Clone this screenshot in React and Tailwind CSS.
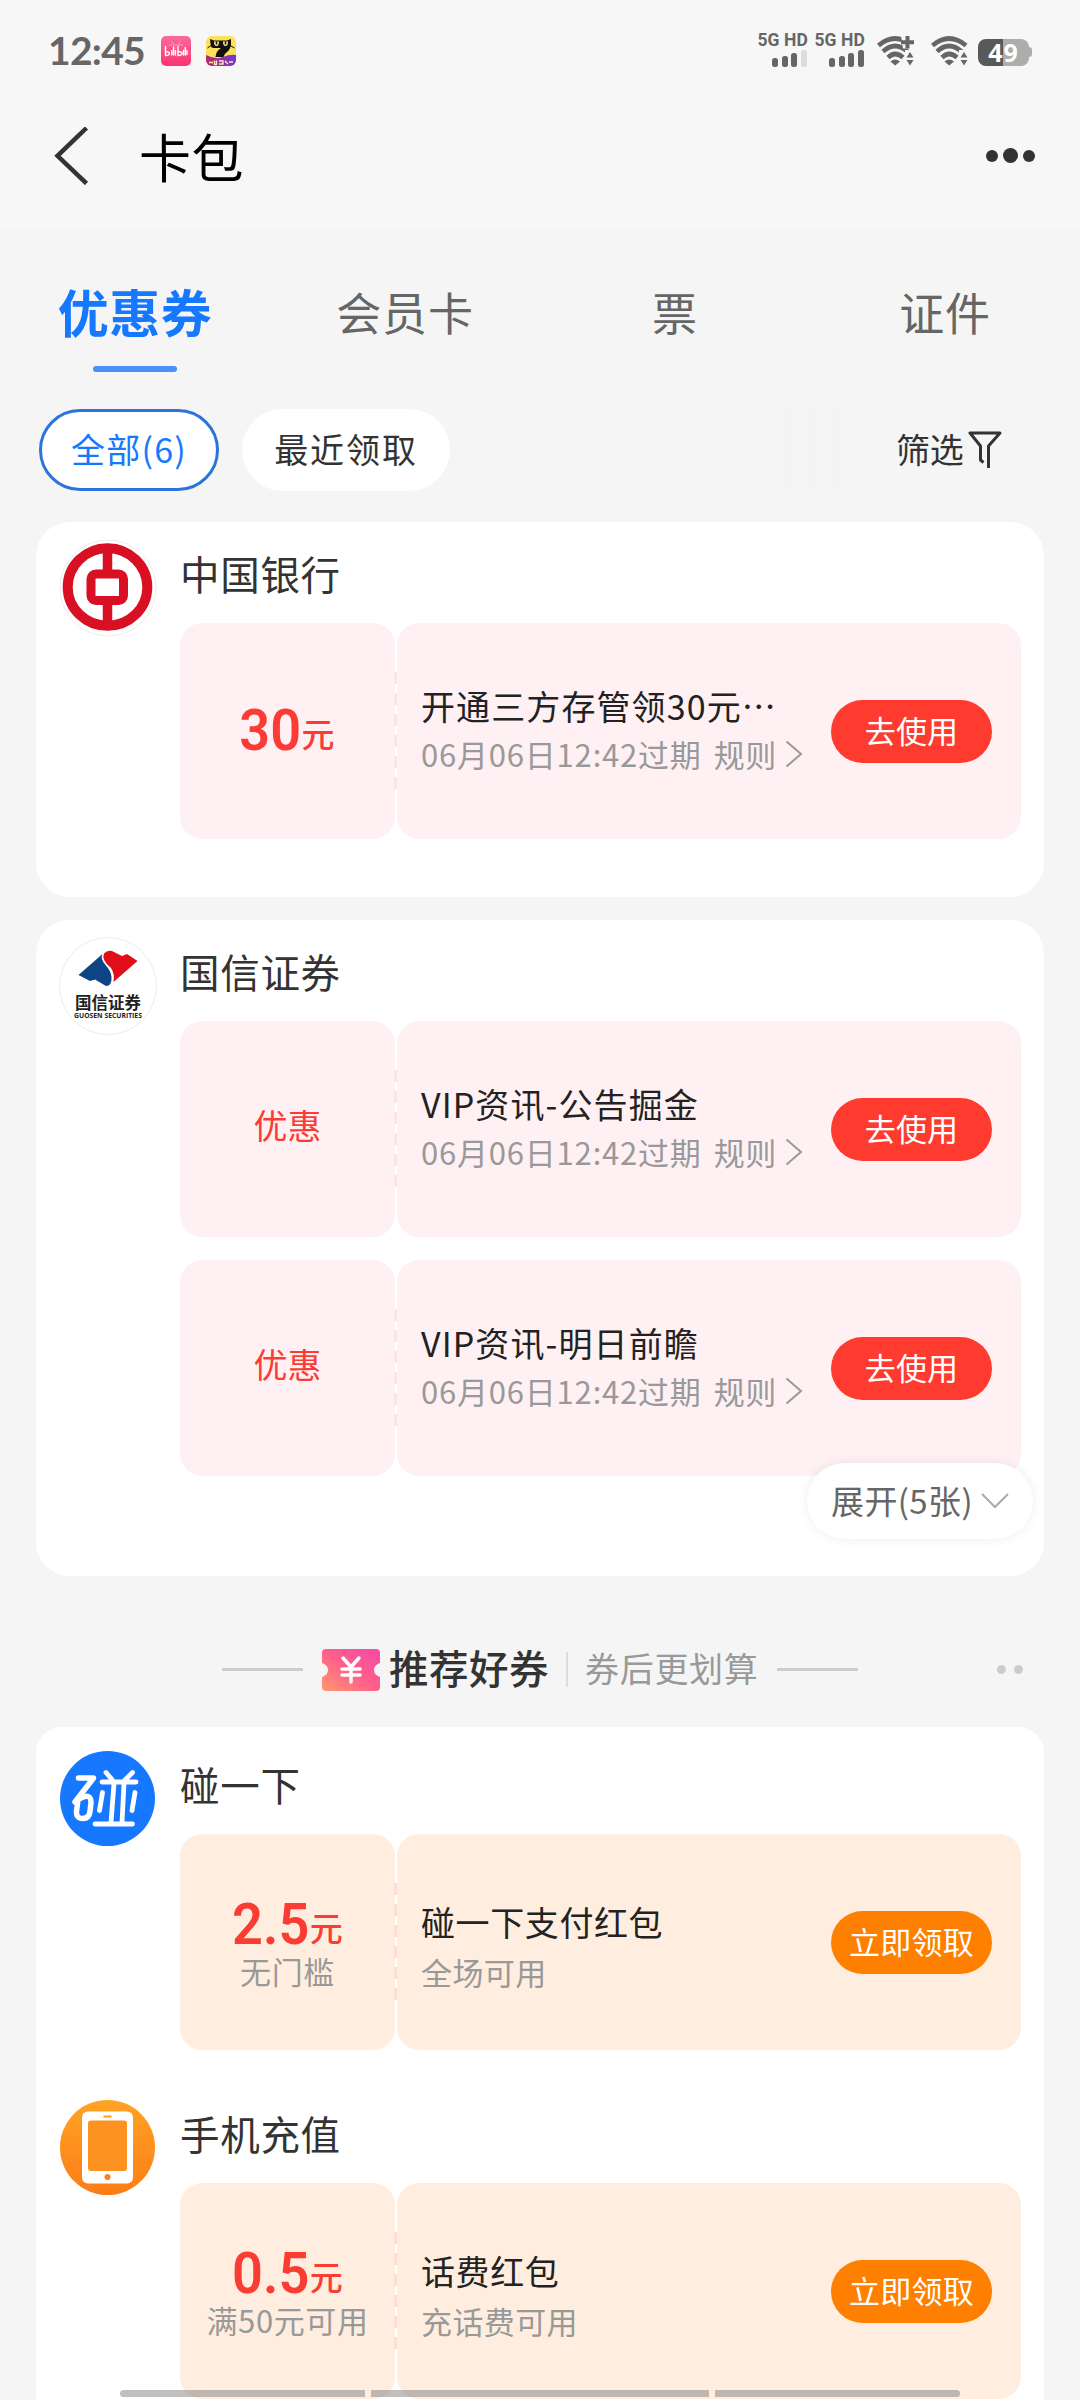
import React from 'react';

const Signal = ({ weak }) => (
  <div className="flex w-[47px] flex-col items-end">
    <span className="h-[14px] whitespace-nowrap font-['Roboto'] text-[17.5px] leading-[14px] font-bold tracking-[0.1px] text-[#666]">5G HD</span>
    <div className="mt-[3px] mr-[1px] flex h-[17px] items-end gap-[3.7px]">
      <div className="h-[9px] w-[6px] rounded-[2.5px] bg-[#666]"></div>
      <div className="h-[11px] w-[6px] rounded-[2.5px] bg-[#666]"></div>
      <div className="h-[14px] w-[6px] rounded-[2.5px] bg-[#666]"></div>
      <div className={`h-[17px] w-[6px] rounded-[2.5px] ${weak ? 'bg-[#dcdcdc]' : 'bg-[#666]'}`}></div>
    </div>
  </div>
);

const Wifi = ({ plus }) => (
  <svg width="38" height="32" viewBox="0 0 38 32" fill="none" stroke="#666" strokeWidth="4.6">
    <path d="M1.5 10.500Q18 -3.500 35 10.500" />
    <path d="M6 16.500Q18 5.500 30.500 16.500" />
    <path d="M11 22.500Q18 15.500 26 22.500" />
    <path d="M13.500 26.500Q18 22.500 23 26.500L18.200 30.500Z" fill="#666" stroke="none" />
    {plus && (
      <>
        <path d="M24 0H38V13.500H26Z" fill="#f7f7f7" stroke="none" />
        <path d="M24 7.200H37M30.500 1V13.500" strokeWidth="4" />
      </>
    )}
    <path d="M28 15H38V32H28Z" fill="#f7f7f7" stroke="none" />
    <path d="M29.500 22.500L33 17L36.500 22.500ZM29.500 25L33 30.500L36.500 25Z" fill="#666" stroke="none" />
  </svg>
);

const StatusBar = () => (
  <div className="flex h-[100px] items-center pr-[48px] pl-[48px]">
    <span className="w-[113px] font-['Lato'] text-[39px] leading-[40px] font-bold tracking-[-0.7px] text-[#666]">12:45</span>
    <svg width="30" height="30" viewBox="0 0 30 30" className="mt-[2px]">
      <defs>
        <linearGradient id="pink" x1="0" y1="0" x2="0" y2="1">
          <stop offset="0" stopColor="#fb6a9c" />
          <stop offset="1" stopColor="#fd3373" />
        </linearGradient>
      </defs>
      <rect width="30" height="30" rx="5" fill="url(#pink)" />
      <path d="M10 5l3 3M20 5l-3 3M8 9h14" stroke="#ff9dbd" strokeWidth="1" />
      <g fill="none" stroke="#fff" strokeWidth="1.4" strokeLinecap="round">
        <path d="M4.500 10.500v9q4 0 4-2.500q-1-1.500-3.500-1M10.800 14.500v4.500M12.600 11v8M14.500 14.500v4.500M17 10.500v9q4 0 4-2.500q-1-1.500-3.500-1M22.500 14.500v4.500M24.300 11.500v7.500M26 14.500v4" />
      </g>
    </svg>
    <svg width="30" height="30" viewBox="0 0 30 30" className="mt-[2px] ml-[15px]">
      <defs>
        <linearGradient id="cat" x1="0" y1="0" x2="1" y2="0">
          <stop offset="0" stopColor="#b82a6a" />
          <stop offset="1" stopColor="#7438d6" />
        </linearGradient>
        <clipPath id="catClip"><rect width="30" height="30" rx="6" /></clipPath>
      </defs>
      <g clipPath="url(#catClip)">
        <rect width="30" height="30" fill="#fbe25a" />
        <path d="M0 19Q10 24 17 21T30 19V30H0Z" fill="url(#cat)" />
        <path d="M4 3L8 4.500H21L25 3V9Q24 14 21 16Q18 18 17.500 21H9.500Q10 15 15 12H7Q4.500 11 4.500 8Z" fill="#15100a" />
        <path d="M1.500 12L5 9.500M28.500 12L24 9.500" stroke="#15100a" strokeWidth="1" />
        <path d="M8 5.500h5q0 4.500-2.500 4.500T8 5.500ZM17 5.500h5q0 4.500-2.500 4.500T17 5.500Z" fill="#fff3a0" />
        <path d="M10.500 5.500v3M19.500 5.500v3" stroke="#15100a" strokeWidth="1.600" />
        <path d="M3 26.500h4M8.500 24.500v4h2v-4M13 25h4v3h-4M19 25l3 3M23 26h4" stroke="#ffe9b8" strokeWidth="1.400" fill="none" />
      </g>
    </svg>
    <div className="ml-auto flex items-center">
      <Signal weak />
      <div className="w-[10px]"></div>
      <Signal />
      <div className="mt-[2px] ml-[12px] flex items-center gap-[16px]">
        <Wifi plus />
        <Wifi />
      </div>
      <div className="mt-[4px] ml-[9px] flex items-center">
        <div className="flex h-[27px] w-[51px] items-center justify-center rounded-[8px] bg-linear-to-r from-[#595959] from-49% to-[#adadad] to-49%">
          <span className="font-['Open_Sans'] text-[25px] leading-[27px] font-bold tracking-[1px] text-white">49</span>
        </div>
        <div className="h-[10px] w-[3px] rounded-r-[3px] bg-[#adadad]"></div>
      </div>
    </div>
  </div>
);

const NavBar = () => (
  <div className="flex h-[130px] items-start pr-[45px] pl-[54px]">
    <svg width="36" height="58" viewBox="0 0 36 58" className="mt-[27px]" fill="none" stroke="#333" strokeWidth="4.5">
      <path d="M32.500 1L3.500 28.800L32.500 56.500" />
    </svg>
    <h1 className="mt-[18px] ml-[49px] text-[52px] leading-[76px] tracking-[0.5px] text-black">卡包</h1>
    <div className="mt-[48px] ml-auto flex items-center gap-[5px]">
      <div className="h-[12px] w-[12px] rounded-full bg-[#333]"></div>
      <div className="h-[15px] w-[15px] rounded-full bg-[#333]"></div>
      <div className="h-[12px] w-[12px] rounded-full bg-[#333]"></div>
    </div>
  </div>
);

const Tabs = () => (
  <div className="grid h-[179px] grid-cols-4 text-center text-[45px] leading-[64px] tracking-[0.8px] text-[#666]">
    <div className="flex flex-col items-center pt-[43px]">
      <span className="text-[51px] leading-[76px] font-bold tracking-[0.5px] text-[#1677ff]">优惠券</span>
      <div className="mt-[17px] h-[6px] w-[84px] rounded-full bg-[#4a90f9]"></div>
    </div>
    <div className="pt-[50px]">会员卡</div>
    <div className="pt-[50px]">票</div>
    <div className="pt-[50px]">证件</div>
  </div>
);

const Filters = () => (
  <div className="flex h-[82px] items-center pl-[39px] text-[34px] leading-[50px]">
    <div className="flex h-full w-[180px] items-center justify-center rounded-full border-[3px] border-[#2b74dc] bg-white pb-[2px] text-[#1677ff]">
      <span className="tracking-[1.2px]">全部(6)</span>
    </div>
    <div className="ml-[23px] flex h-full w-[208px] items-center justify-center rounded-full bg-white pb-[2px] text-[#333]">
      <span className="tracking-[1.9px]">最近领取</span>
    </div>
    <div className="ml-[334px] flex h-full w-[56px] justify-between">
      <div className="w-[8px] bg-[#f4f4f4]"></div>
      <div className="w-[16px] bg-[#f4f4f4]"></div>
      <div className="w-[12px] bg-[#f4f4f4]"></div>
    </div>
    <div className="ml-[56px] flex items-center text-[#333]">
      <span className="pb-[2px] tracking-[-0.2px]">筛选</span>
      <svg width="34" height="40" viewBox="0 0 34 40" className="ml-[4px]" fill="none" stroke="#333" strokeWidth="3" strokeLinejoin="round">
        <path d="M15.500 32.500L12.500 30V16L2 3H32L20.500 16V38" />
      </svg>
    </div>
  </div>
);

const BankLogo = () => (
  <svg width="98" height="98" viewBox="0 0 98 98">
    <circle cx="49" cy="49" r="48" fill="#fff" stroke="#f3e9ea" strokeWidth="1" />
    <ellipse cx="48.500" cy="48" rx="39.800" ry="38.800" fill="none" stroke="#d90f23" strokeWidth="10" />
    <path d="M48.500 10V34M48.500 63V88" stroke="#d90f23" strokeWidth="9.500" />
    <rect x="32" y="35" width="32.500" height="26.500" rx="5" fill="#fff" stroke="#d90f23" strokeWidth="9" />
  </svg>
);

const GuosenLogo = () => (
  <div className="flex h-[98px] w-[98px] flex-col items-center rounded-full border border-[#ececec] bg-white pt-[12px]">
    <svg width="60" height="37" viewBox="0 0 60 37">
      <path d="M24.500 4L0.500 25L12 31L17 29.500L28 36Q34 36 33.500 27Q33 21 27.500 15Q22 9 24.500 4Z" fill="#0d4483" />
      <path d="M26 3.500Q29 0 34 1L44 6L49 4L59.500 11L35.500 32Q37 24 33 18Q23 10 26 3.500Z" fill="#e20f1a" />
    </svg>
    <span className="mt-[5px] whitespace-nowrap text-[16.5px] leading-[20px] font-semibold text-[#222]">国信证券</span>
    <span className="whitespace-nowrap font-['Open_Sans'] text-[6.8px] leading-[8px] font-bold text-[#222]">GUOSEN SECURITIES</span>
  </div>
);

const TapLogo = () => (
  <svg width="98" height="98" viewBox="0 0 98 98" fill="none" stroke="#fff" strokeWidth="5.5" strokeLinecap="round" strokeLinejoin="round">
    <circle cx="48.500" cy="48.500" r="47.500" fill="#1677ff" stroke="none" />
    <path d="M19.500 28H34.500L16 52M21 48.500Q32 42.500 32 52.500L31 61.500Q30 68.500 24 68.500Q17 68.500 17.500 61.500L19 49.500" />
    <path d="M47 22.500L53 29.500M73.500 22.500L65.500 30.500M43 32H77M55 33.500L52 72.500M65 33.500L63 72.500M43.500 42.500L40.500 60.500M76 42.500L73 60.500M36 74H73.500" strokeWidth="4.8" />
  </svg>
);

const PhoneLogo = () => (
  <svg width="98" height="98" viewBox="0 0 98 98">
    <defs>
      <linearGradient id="orange" x1="0" y1="0" x2="0" y2="1">
        <stop offset="0" stopColor="#ffa424" />
        <stop offset="1" stopColor="#fd7c17" />
      </linearGradient>
    </defs>
    <circle cx="48.500" cy="48.500" r="47.500" fill="url(#orange)" />
    <rect x="23" y="12.500" width="51" height="72" rx="6" fill="#fff" />
    <rect x="29" y="21.500" width="39" height="50.500" rx="3" fill="#fe9220" />
    <rect x="44.500" y="16.500" width="8" height="2" fill="#fe9c22" />
    <circle cx="48.500" cy="78" r="3" fill="#fd7f18" />
  </svg>
);

const Coupon = ({ amount, unit, note, title, sub, rule, action, orange }) => (
  <div className={`flex h-[216px] w-[841px] ${orange ? 'text-[#f93d33]' : 'text-[#fb3b35]'}`}>
    <div className={`flex w-[215px] flex-col items-center justify-center gap-[4px] rounded-[22px] ${orange ? 'bg-[#ffeedf] pt-[3px]' : 'bg-[#fff1f3]'}`}>
      {amount ? (
        <div className="mr-[4px] flex items-start">
          <span className="origin-right scale-x-95 font-['Roboto'] text-[57px] leading-[50px] font-semibold">{amount}</span>
          <span className="mt-[7px] text-[33px] leading-[40px] font-medium">{unit}</span>
        </div>
      ) : (
        <span className="pb-[8px] text-[34px] leading-[48px]">{unit}</span>
      )}
      {note && <span className="text-[31px] leading-[34px] tracking-[0.6px] text-[#999]">{note}</span>}
    </div>
    <div className="z-10 -ml-[1px] flex w-[3px] items-center">
      <div className={`h-[118px] w-[3px] ${orange ? 'bg-[repeating-linear-gradient(to_bottom,#fbdfd3_0_12px,transparent_12px_21px)]' : 'bg-[repeating-linear-gradient(to_bottom,#fbe3e6_0_12px,transparent_12px_21px)]'}`}></div>
    </div>
    <div className={`flex flex-1 items-center justify-between rounded-[22px] pr-[29px] pl-[24px] ${orange ? 'bg-[#ffeedf]' : 'bg-[#fff1f3]'}`}>
      <div className={`whitespace-nowrap ${orange ? 'pt-[9px]' : 'pb-[3px]'}`}>
        <div className={`text-[34px] leading-[48px] text-[#222] ${orange ? 'tracking-[0.6px]' : 'tracking-[1.1px]'}`}>{title}</div>
        <div className="flex items-center text-[31px] leading-[48px] text-[#999]">
          <span className={rule ? 'tracking-[0.8px]' : 'mt-[2px] tracking-[0.4px]'}>{sub}</span>
          {rule && (
            <>
              <span className="ml-[12px] tracking-[0.5px]">规则</span>
              <svg width="18" height="28" viewBox="0 0 18 28" className="ml-[8px]" fill="none" stroke="#999" strokeWidth="2">
                <path d="M1.500 1.500L16 14L1.500 26.500" />
              </svg>
            </>
          )}
        </div>
      </div>
      <div className={`flex h-[63px] w-[161px] items-center justify-center rounded-full pb-[3px] text-[31px] leading-[44px] tracking-[0.2px] text-white ${orange ? 'bg-[#ff8000]' : 'bg-[#ff3b30]'}`}>{action}</div>
    </div>
  </div>
);

const Merchant = ({ logo, name, children }) => (
  <div className="flex">
    <div className="mt-[17px] ml-[23px] w-[98px]">{logo}</div>
    <div className="ml-[23px]">
      <h2 className="mt-[23px] h-[78px] text-[39.5px] leading-[56px] tracking-[0.7px] text-[#333]">{name}</h2>
      <div className="flex flex-col gap-[23px]">{children}</div>
    </div>
  </div>
);

const vip = { unit: '优惠', sub: '06月06日12:42过期', rule: true, action: '去使用' };

export default function App() {
  return (
    <div className="relative h-[2400px] w-[1080px] overflow-hidden bg-[#f5f5f5] font-['Noto_Sans_CJK_SC',sans-serif]">
      <header className="bg-[#f7f7f7]">
        <StatusBar />
        <NavBar />
      </header>
      <Tabs />
      <Filters />

      <main className="px-[36px] pt-[31px]">
        <section className="h-[375px] rounded-[34px] bg-white">
          <Merchant logo={<BankLogo />} name="中国银行">
            <Coupon amount="30" unit="元" title="开通三方存管领30元⋯" sub={vip.sub} rule action="去使用" />
          </Merchant>
        </section>

        <section className="relative mt-[23px] h-[656px] rounded-[34px] bg-white">
          <Merchant logo={<GuosenLogo />} name="国信证券">
            <Coupon {...vip} title="VIP资讯-公告掘金" />
            <Coupon {...vip} title="VIP资讯-明日前瞻" />
          </Merchant>
          <div className="absolute right-[11px] bottom-[37px] z-20 flex h-[76px] w-[226px] items-center rounded-full bg-white pl-[24px] text-[33px] text-[#666] shadow-[0_0_12px_rgba(0,0,0,0.08)]">
            <span className="pb-[1px] whitespace-nowrap tracking-[0.4px]">展开(5张)</span>
            <svg width="28" height="16" viewBox="0 0 28 16" className="ml-[8px]" fill="none" stroke="#aaa" strokeWidth="2">
              <path d="M1 1L14 14L27 1" />
            </svg>
          </div>
        </section>

        <div className="relative flex h-[151px] items-center pt-[35px] pl-[186px]">
          <div className="h-[3px] w-[81px] bg-[#ccc]"></div>
          <svg width="58" height="42" viewBox="0 0 58 42" className="mt-[1px] ml-[19px]">
            <defs>
              <linearGradient id="ticket" x1="0" y1="1" x2="1" y2="0">
                <stop offset="0" stopColor="#ff9a6c" />
                <stop offset="0.5" stopColor="#ff5f8b" />
                <stop offset="1" stopColor="#f549a9" />
              </linearGradient>
            </defs>
            <path d="M4 0H54Q58 0 58 4V14Q52 16 52 21T58 28V38Q58 42 54 42H4Q0 42 0 38V28Q6 26 6 21T0 14V4Q0 0 4 0Z" fill="url(#ticket)" />
            <path d="M21 9L29 18L37 9M29 18V33M20 20H38M20 26H38" stroke="#fff" strokeWidth="3.5" strokeLinecap="round" fill="none" />
          </svg>
          <span className="ml-[9px] pb-[4px] text-[39.5px] font-medium tracking-[0.5px] text-[#333]">推荐好券</span>
          <div className="ml-[17px] h-[35px] w-[2px] bg-[#ddd]"></div>
          <span className="ml-[17px] pb-[3px] text-[34px] tracking-[0.7px] text-[#999]">券后更划算</span>
          <div className="ml-[18px] h-[3px] w-[81px] bg-[#ccc]"></div>
          <div className="mr-[21px] ml-auto flex gap-[8px]">
            <div className="h-[9px] w-[9px] rounded-full bg-[#ccc]"></div>
            <div className="h-[9px] w-[9px] rounded-full bg-[#ccc]"></div>
          </div>
        </div>

        <section className="flex h-[720px] flex-col gap-[32px] rounded-[26px] bg-white pt-[6px]">
          <Merchant logo={<TapLogo />} name="碰一下">
            <Coupon orange amount="2.5" unit="元" note="无门槛" title="碰一下支付红包" sub="全场可用" action="立即领取" />
          </Merchant>
          <Merchant logo={<PhoneLogo />} name="手机充值">
            <Coupon orange amount="0.5" unit="元" note="满50元可用" title="话费红包" sub="充话费可用" action="立即领取" />
          </Merchant>
        </section>
      </main>

      {/* System navigation hint */}
      <div className="absolute bottom-[3px] left-[120px] z-30 flex gap-[6px] opacity-50">
        <div className="h-[7px] w-[245px] rounded-l-full bg-[#808080]"></div>
        <div className="h-[7px] w-[338px] bg-[#808080]"></div>
        <div className="h-[7px] w-[245px] rounded-r-full bg-[#808080]"></div>
      </div>
    </div>
  );
}
